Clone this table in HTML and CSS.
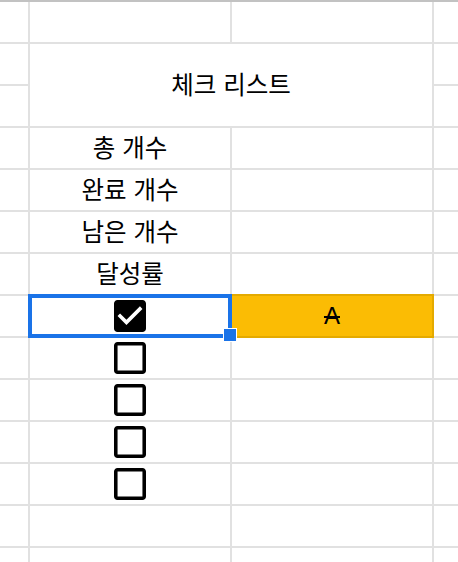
FILE: index.html
```html
<!DOCTYPE html>
<html lang="ko">
<head>
<meta charset="utf-8">
<title>체크 리스트</title>
<link rel="stylesheet" href="styles.css">
</head>
<body>
<div class="sheet">
  <!-- row 0 -->
  <div class="cell"></div><div class="cell"></div><div class="cell"></div><div class="cell"></div>
  <!-- row 1-2 -->
  <div class="cell"></div><div class="cell merged label">체크 리스트</div><div class="cell"></div>
  <div class="cell"></div><div class="cell"></div>
  <!-- row 3-6 -->
  <div class="cell"></div><div class="cell label">총 개수</div><div class="cell"></div><div class="cell"></div>
  <div class="cell"></div><div class="cell label">완료 개수</div><div class="cell"></div><div class="cell"></div>
  <div class="cell"></div><div class="cell label">남은 개수</div><div class="cell"></div><div class="cell"></div>
  <div class="cell"></div><div class="cell label">달성률</div><div class="cell"></div><div class="cell"></div>
  <!-- row 7 -->
  <div class="cell"></div>
  <div class="cell selected">
    <svg class="box" viewBox="3 3 18 18" width="32" height="32"><path d="M19 3H5c-1.11 0-2 .9-2 2v14c0 1.1.89 2 2 2h14c1.11 0 2-.9 2-2V5c0-1.1-.89-2-2-2zm-9 14l-5-5 1.41-1.41L10 14.17l7.59-7.59L19 8l-9 9z"/></svg>
    <span class="handle"></span>
  </div>
  <div class="cell done"><span class="strike">A</span></div>
  <div class="cell"></div>
  <!-- rows 8-11 -->
  <div class="cell"></div><div class="cell"><svg class="box" viewBox="3 3 18 18" width="32" height="32"><path d="M19 5v14H5V5h14m0-2H5c-1.1 0-2 .9-2 2v14c0 1.1.9 2 2 2h14c1.1 0 2-.9 2-2V5c0-1.1-.9-2-2-2z"/></svg></div><div class="cell"></div><div class="cell"></div>
  <div class="cell"></div><div class="cell"><svg class="box" viewBox="3 3 18 18" width="32" height="32"><path d="M19 5v14H5V5h14m0-2H5c-1.1 0-2 .9-2 2v14c0 1.1.9 2 2 2h14c1.1 0 2-.9 2-2V5c0-1.1-.9-2-2-2z"/></svg></div><div class="cell"></div><div class="cell"></div>
  <div class="cell"></div><div class="cell"><svg class="box" viewBox="3 3 18 18" width="32" height="32"><path d="M19 5v14H5V5h14m0-2H5c-1.1 0-2 .9-2 2v14c0 1.1.9 2 2 2h14c1.1 0 2-.9 2-2V5c0-1.1-.9-2-2-2z"/></svg></div><div class="cell"></div><div class="cell"></div>
  <div class="cell"></div><div class="cell"><svg class="box" viewBox="3 3 18 18" width="32" height="32"><path d="M19 5v14H5V5h14m0-2H5c-1.1 0-2 .9-2 2v14c0 1.1.9 2 2 2h14c1.1 0 2-.9 2-2V5c0-1.1-.9-2-2-2z"/></svg></div><div class="cell"></div><div class="cell"></div>
  <!-- rows 12-13 -->
  <div class="cell"></div><div class="cell"></div><div class="cell"></div><div class="cell"></div>
  <div class="cell"></div><div class="cell"></div><div class="cell"></div><div class="cell"></div>
</div>
</body>
</html>
```

FILE: styles.css
```css
html, body {
  margin: 0;
  padding: 0;
  background: #ffffff;
  overflow: hidden;
}

body {
  width: 458px;
  height: 562px;
  font-family: "Liberation Sans", "Noto Sans CJK KR", sans-serif;
  font-size: 24px;
  color: #000000;
}

.sheet {
  display: grid;
  grid-template-columns: 28px 200px 200px 24px;
  grid-auto-rows: 40px;
  gap: 2px;
  background: #e1e1e1;
  border-top: 2px solid #c2c2c2;
}

.cell {
  background: #ffffff;
  display: flex;
  align-items: center;
  justify-content: center;
  position: relative;
  white-space: nowrap;
}

.label {
  font-family: "Noto Sans CJK KR", sans-serif;
  font-size: 24.5px;
  line-height: 30px;
  padding-bottom: 2px;
  box-sizing: border-box;
}

.merged {
  grid-column: span 2;
  grid-row: span 2;
}

.box {
  display: block;
  fill: #000000;
}

.selected::after {
  content: "";
  position: absolute;
  inset: -2px;
  border: 4px solid #1a73e8;
  z-index: 2;
  pointer-events: none;
}

.handle {
  position: absolute;
  right: -7px;
  bottom: -6px;
  width: 12px;
  height: 12px;
  background: #1a73e8;
  border: 1px solid #ffffff;
  z-index: 3;
}

.done {
  background: #fbbc04;
}

.done::before {
  content: "";
  position: absolute;
  inset: -2px;
  border: 2px solid #e4aa00;
  z-index: 1;
}

.strike {
  text-decoration: line-through;
  text-decoration-thickness: 2px;
}
```
